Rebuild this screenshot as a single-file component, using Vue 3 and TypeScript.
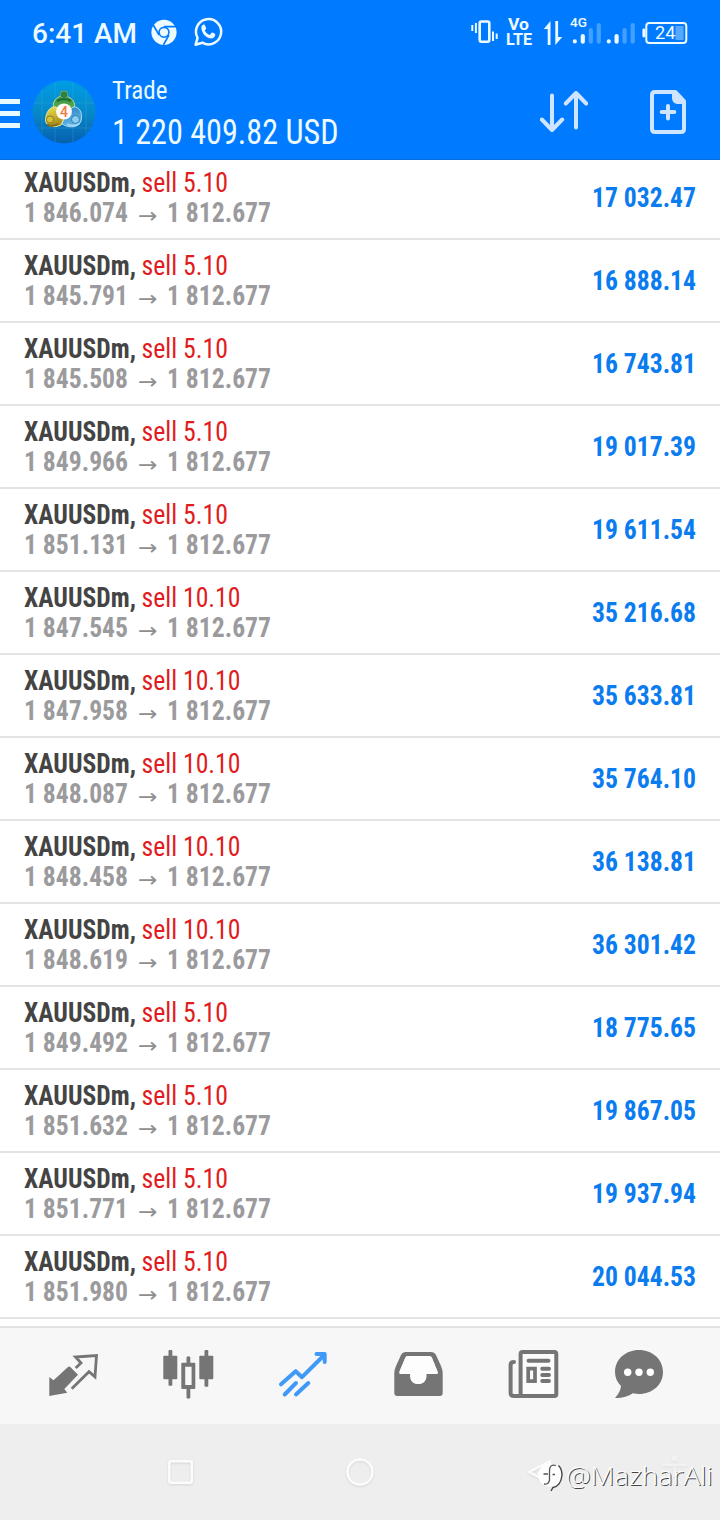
<script setup lang="ts">
interface Position {
  volume: string
  open: string
  profit: string
}

const current = '1 812.677'
const positions: Position[] = [
  { volume: '5.10', open: '1 846.074', profit: '17 032.47' },
  { volume: '5.10', open: '1 845.791', profit: '16 888.14' },
  { volume: '5.10', open: '1 845.508', profit: '16 743.81' },
  { volume: '5.10', open: '1 849.966', profit: '19 017.39' },
  { volume: '5.10', open: '1 851.131', profit: '19 611.54' },
  { volume: '10.10', open: '1 847.545', profit: '35 216.68' },
  { volume: '10.10', open: '1 847.958', profit: '35 633.81' },
  { volume: '10.10', open: '1 848.087', profit: '35 764.10' },
  { volume: '10.10', open: '1 848.458', profit: '36 138.81' },
  { volume: '10.10', open: '1 848.619', profit: '36 301.42' },
  { volume: '5.10', open: '1 849.492', profit: '18 775.65' },
  { volume: '5.10', open: '1 851.632', profit: '19 867.05' },
  { volume: '5.10', open: '1 851.771', profit: '19 937.94' },
  { volume: '5.10', open: '1 851.980', profit: '20 044.53' },
]
const sellWidth = (p: Position): number => (p.volume.length > 4 ? 99 : 86.5)
</script>

<template>
  <div class="screen">
    <header class="header">
      <svg class="status" viewBox="0 0 720 64" width="720" height="64">
        <text class="clock" x="32" y="43" textLength="105" lengthAdjust="spacingAndGlyphs">6:41 AM</text>
        <g transform="translate(164 32.3)">
          <circle r="12.6" fill="#edfaff" />
          <circle r="4.9" fill="none" stroke="#007aff" stroke-width="1.6" />
          <path d="M0-5.6H12M-4.9 2.8-10.6-7M4.9 2.8-.6 12.6" fill="none" stroke="#007aff" stroke-width="1.7" />
        </g>
        <g transform="translate(208 31.5)">
          <path d="M-12.4 13.2-10.4 6.4A12.6 12.6 0 1 1-5.6 11.2Z" fill="none" stroke="#edfaff" stroke-width="2.5" stroke-linejoin="round" />
          <path d="M-6.6-4.6C-5.9-6.9-3.8-7.4-3.2-6.5L-1.8-3.2C-1.7-2.4-2.8-1.5-3.2-.9-2.3 1.3-.4 2.9 1.7 3.6L3.4 1.6C4-.1 7.3 2.6 7.3 3 7.3 6 4.2 7.4 1.8 6.8-2.5 5.7-6.9 1.2-6.6-4.6Z" fill="#edfaff" />
        </g>
        <g fill="none" stroke="#edfaff" stroke-width="2">
          <rect x="479.7" y="21.5" width="9.6" height="20.3" rx="1.7" stroke-width="2.6" />
          <path d="M472.3 25v6M475.9 23v10M493 31.5v9.5M496.7 33.5v5.5" />
        </g>
        <text class="volte" x="508" y="30" textLength="21" lengthAdjust="spacingAndGlyphs">Vo</text>
        <text class="volte" x="506" y="45" textLength="26" lengthAdjust="spacingAndGlyphs">LTE</text>
        <path d="M550.5 45V21L543.8 29H547.7V45ZM555.3 21V45L562.3 37H558.1V21Z" fill="#edfaff" />
        <text class="net" x="570" y="27" textLength="17" lengthAdjust="spacingAndGlyphs">4G</text>
        <g fill="none" stroke-width="4.2" stroke-linecap="round">
          <path d="M574.8 41.4v.1M582.8 36v5.7M608.8 41.4v.1M616.6 36v5.7" stroke="#edfaff" />
          <path d="M590.8 30v11.7M598.8 25v16.7M624.6 30v11.7M632.7 25v16.7" stroke="#42a0ff" />
        </g>
        <rect x="646.3" y="23" width="40" height="20" rx="3" fill="none" stroke="#edfaff" stroke-width="2" />
        <rect x="642.4" y="28.5" width="3" height="9" rx="1.4" fill="#edfaff" />
        <rect x="675.5" y="26" width="8" height="14" fill="#55a9ff" />
        <text class="charge" x="655" y="39" textLength="20.5" lengthAdjust="spacingAndGlyphs">24</text>
      </svg>

      <div class="appbar">
        <svg class="menu" viewBox="0 0 20 96" width="20" height="96">
          <path d="M0 37.5h20M0 49.5h20M0 61.5h20" stroke="#e8faff" stroke-width="5" />
        </svg>
        <svg class="avatar" viewBox="-32 -32 64 64" width="64" height="64">
          <defs>
            <linearGradient id="sky" x1="0" y1="0" x2="0" y2="1">
              <stop offset="0" stop-color="#009de4" /><stop offset=".5" stop-color="#0789c8" /><stop offset="1" stop-color="#075fae" />
            </linearGradient>
            <linearGradient id="leaf" x1="0" y1="0" x2="0" y2="1">
              <stop offset="0" stop-color="#2f8a42" /><stop offset="1" stop-color="#7cc356" />
            </linearGradient>
            <linearGradient id="gold" x1="0" y1="0" x2=".3" y2="1">
              <stop offset="0" stop-color="#f1e24c" /><stop offset="1" stop-color="#a38a1d" />
            </linearGradient>
            <linearGradient id="aqua" x1="0" y1="0" x2=".3" y2="1">
              <stop offset="0" stop-color="#2d83bd" /><stop offset="1" stop-color="#5db6ea" />
            </linearGradient>
          </defs>
          <circle r="31.5" fill="url(#sky)" />
          <path d="M-22-22V22M-9-30V30M9-30V30M22-22V22M-30-9H30M-27 16H27" stroke="#5cb7e4" stroke-width=".8" opacity=".3" />
          <g stroke-width="1" stroke-linejoin="round">
            <path d="M-10-2C-13-10-7-16-1-16 7-16 13-10 10-1L6 3H-6Z" fill="url(#leaf)" stroke="#b9dca0" />
            <path d="M9-5C16-6 19 2 17 9 15 15 6 17-2 12L1 3Z" fill="url(#aqua)" stroke="#a8d8f4" />
            <path d="M-8-5C-14-6-18 0-18.500 8-18 15-10 16-3 13L1 4Z" fill="url(#gold)" stroke="#efe89a" />
          </g>
          <g stroke-width=".8">
            <circle cx="0" cy="-17.3" r="3.9" fill="#2b8243" stroke="#7cb978" />
            <path d="M-7-11Q0-15 7-11" fill="none" stroke="#1c6e36" stroke-width="2.200" />
            <circle cx="-14" cy="7.500" r="3.600" fill="#d6c23a" stroke="#806f18" />
            <path d="M-17 12.500Q-12 15.500-6 12" fill="none" stroke="#7d6e1c" stroke-width="2" />
            <circle cx="11.500" cy="7.500" r="4" fill="#8acdf3" stroke="#226fa5" />
            <path d="M3 12Q10 15.500 15.500 11.500" fill="none" stroke="#a7d9f5" stroke-width="1.800" />
          </g>
          <circle cy="-.5" r="8" fill="#fffaf6" />
          <text class="badge" x="0" y="4.500" text-anchor="middle">4</text>
        </svg>
        <svg class="account" viewBox="0 0 260 96" width="260" height="96">
          <text class="caption" x="16" y="35" textLength="55.500" lengthAdjust="spacingAndGlyphs">Trade</text>
          <text class="balance" x="16" y="79.500" textLength="226.500" lengthAdjust="spacingAndGlyphs">1 220 409.82 USD</text>
        </svg>
        <svg class="sort" viewBox="0 0 48 44" width="48" height="44">
          <path d="M12 5.500V40M1.800 29.500 12 40 22.200 29.500M36 37.500V3M25.800 13.500 36 3 46.200 13.500" />
        </svg>
        <svg class="add" viewBox="0 0 38 46" width="38" height="46">
          <path d="M26.500 3H6Q3 3 3 6V40Q3 43 6 43H32Q35 43 35 40V12Z" />
          <path class="fold" d="M25 3H27L35 11V15H28Q23 14 23 9V5Z" />
          <path d="M19 17V29.500M12.700 23H25.300" />
        </svg>
      </div>
    </header>

    <main class="list">
      <article v-for="p in positions" :key="p.open" class="row">
        <svg viewBox="0 0 300 81" width="300" height="81">
          <text class="symbol" x="24" y="35" textLength="112" lengthAdjust="spacingAndGlyphs">XAUUSDm,</text>
          <text class="sell" x="141.500" y="35" :textLength="sellWidth(p)" lengthAdjust="spacingAndGlyphs">sell {{ p.volume }}</text>
          <text class="price" x="24" y="65" textLength="104" lengthAdjust="spacingAndGlyphs">{{ p.open }}</text>
          <text class="arrow" x="138" y="66" textLength="19.500" lengthAdjust="spacingAndGlyphs">→</text>
          <text class="price" x="167" y="65" textLength="104" lengthAdjust="spacingAndGlyphs">{{ current }}</text>
        </svg>
        <svg viewBox="0 0 128 81" width="128" height="81">
          <text class="profit" x="0" y="50" textLength="104" lengthAdjust="spacingAndGlyphs">{{ p.profit }}</text>
        </svg>
      </article>
    </main>

    <nav class="tabs">
      <svg viewBox="0 0 115 96">
        <path d="M33.300 49 37.500 52.300 52.300 38.800Q53.300 38 54.300 38.900L62 46.700 48.300 61 51.300 64.700 33.300 68Z" fill="#757575" />
        <path d="M59.700 40 65 35 59.500 29 80.500 27.500 79 48.800 73 43.700 55.700 60.700" fill="none" stroke="#757575" stroke-width="2.800" />
      </svg>
      <svg viewBox="0 0 115 96" fill="#757575">
        <rect x="32.300" y="27.700" width="14" height="23.500" rx="1" /><rect x="37.500" y="22" width="3.800" height="35.700" rx="1" />
        <rect x="68.300" y="27.700" width="14" height="23.500" rx="1" /><rect x="73.500" y="22" width="3.800" height="36.700" rx="1" />
        <path d="M55.500 29.300Q57.400 27 59.300 29.300V34.700H63.300Q64.300 34.700 64.300 35.700V60Q64.300 61 63.300 61H59.300V69.700Q57.400 72 55.500 69.700V61H51.300Q50.300 61 50.300 60V35.700Q50.300 34.700 51.300 34.700H55.500ZM54.200 38.700V57H60.600V38.700Z" fill-rule="evenodd" />
      </svg>
      <svg viewBox="0 0 115 96" fill="none" stroke="#4199f7" stroke-width="4" stroke-linecap="round" stroke-linejoin="round">
        <path d="M35 56.300 49.700 43.200 56 49.200 78.700 26.500M70.500 26H78.700V34M38.700 66.500 50 55M50 66.500 62.300 55" />
      </svg>
      <svg viewBox="0 0 115 96">
        <path d="M45 24H70Q73.500 24 75 27L80 38Q81.700 42 81.700 45V65Q81.700 68 78.700 68H36.300Q33.300 68 33.300 65V45Q33.300 42 35 38L40 27Q41.500 24 45 24ZM46.500 28Q45 28 44.200 30L38.500 43.500Q38 46 39.500 46H49.300V48.500C49.300 58.500 65.300 58.500 65.300 48.500V46H75.500Q77.300 46 76.500 43.500L71 30Q70.200 28 68.500 28Z" fill="#757575" fill-rule="evenodd" />
        <path d="M46.500 28Q45 28 44.200 30L38.500 43.500Q38 46 39.500 46H49.300V48.500C49.300 58.500 65.300 58.500 65.300 48.500V46H75.500Q77.300 46 76.500 43.500L71 30Q70.200 28 68.500 28Z" fill="#fdfdfd" />
      </svg>
      <svg viewBox="0 0 115 96" fill="none" stroke="#757575" stroke-width="4" stroke-linecap="round">
        <rect x="44.600" y="24" width="35.700" height="44" rx="2" fill="#fcfcfc" />
        <path d="M38 34Q34.600 34 34.600 37V65Q34.600 68 38 68H44" />
        <path d="M52.500 32.800H72.500M66.200 40.800H73M66.200 47H73M66.200 53H73" stroke-width="3.900" />
        <rect x="52.200" y="40.600" width="6.800" height="12.500" stroke-width="3.700" />
      </svg>
      <svg viewBox="0 0 115 96">
        <path d="M48 22C61.500 22 72 31.500 72 44S61.500 66 48 66Q45 66 42 65.200C37 68.500 30 70.500 24 70Q29.500 64 30 58Q24 52 24 44C24 31.500 34.500 22 48 22Z" fill="#757575" />
        <circle cx="36.700" cy="44.300" r="3.700" fill="#fff" /><circle cx="48" cy="44.300" r="3.700" fill="#fff" /><circle cx="59.300" cy="44.300" r="3.700" fill="#fff" />
      </svg>
    </nav>

    <footer class="system">
      <svg viewBox="0 0 720 96" width="720" height="96">
        <g class="keys">
          <rect x="169.300" y="37.300" width="22.500" height="21.500" rx="2" />
          <circle cx="360" cy="48" r="12.500" />
          <path d="M550 37 529 48 550 59Z" />
          <path d="M662 41H687M674.500 41V49L668 60M674.500 49 681 60" opacity=".45" />
          <circle cx="674.500" cy="34.500" r="1.500" opacity=".6" />
        </g>
        <g class="mark">
          <circle cx="550" cy="51" r="11.800" fill="#fff" />
          <path d="M558.500 41.500Q562 45 562 51 561 62 553 63.500L551 67" fill="none" stroke="#454545" stroke-width="1.400" />
          <path d="M556 41.500Q549.500 39.500 549.500 47V56Q548.500 61 544 60M543.500 50H548M552.500 50.500H555" fill="none" stroke="#555" stroke-width="1.300" />
        </g>
        <text class="handle" x="566" y="61" textLength="146.500" lengthAdjust="spacingAndGlyphs">@MazharAli</text>
      </svg>
    </footer>
  </div>
</template>

<style>
body { margin: 0; background: #efefef; }
</style>

<style scoped>
.screen { width: 720px; height: 1520px; display: flex; flex-direction: column; overflow: hidden; background: #fff; font-family: "Roboto Condensed", Roboto, "Liberation Sans", sans-serif; }
svg { display: block; flex: none; }
.header { height: 160px; flex: none; box-sizing: border-box; background: #007aff; border-bottom: 1px solid #0870da; z-index: 1; }
.clock { font: 500 28px Roboto, sans-serif; fill: #edfaff; }
.volte { font: 700 16px Roboto, sans-serif; fill: #edfaff; }
.net { font: 500 13.5px Roboto, sans-serif; fill: #edfaff; }
.charge { font: 400 17.5px Roboto, sans-serif; fill: #edfaff; }
.appbar { height: 96px; display: flex; align-items: center; }
.avatar { margin-left: 12px; }
.badge { font: 500 14px Roboto, sans-serif; fill: #ef7a43; }
.caption { font-size: 26.5px; font-stretch: condensed; fill: #e8faff; }
.balance { font-size: 34.5px; font-stretch: condensed; fill: #edfaff; }
.sort { margin-left: 184px; fill: none; stroke: #cfe5ff; stroke-width: 4; stroke-linecap: round; stroke-linejoin: round; }
.add { margin-left: 61px; fill: none; stroke: #cfe5ff; stroke-width: 4; stroke-linecap: round; stroke-linejoin: round; }
.fold { fill: #cfe5ff; stroke: none; }
.list { height: 1162px; flex: none; margin-top: -3px; }
.row { height: 83px; box-sizing: border-box; display: flex; justify-content: space-between; border-bottom: 2px solid #e4e4e4; font-size: 27px; font-stretch: condensed; }
.symbol { font-weight: 700; fill: #444; }
.sell { fill: #e01c20; }
.price { font-weight: 700; fill: #9b9b9d; }
.arrow { font: 400 21px "DejaVu Sans", sans-serif; fill: #8f8f8f; }
.profit { font-weight: 700; fill: #0a7cf0; }
.tabs { height: 98px; flex: none; margin-top: 7px; box-sizing: border-box; border-top: 2px solid #e2e2e2; padding-left: 16px; display: flex; background: #f7f7f7; }
.tabs svg { width: 115px; height: 96px; }
.system { height: 96px; flex: none; background: #eee; }
.keys { fill: none; stroke: #fcfcfc; stroke-width: 2.4; stroke-linejoin: round; filter: drop-shadow(0 1px 1px rgba(0, 0, 0, .1)); }
.handle { font: 300 25px "Open Sans", "Noto Sans", sans-serif; fill: #fff; text-shadow: 1px 1px 0 #444; }
</style>
